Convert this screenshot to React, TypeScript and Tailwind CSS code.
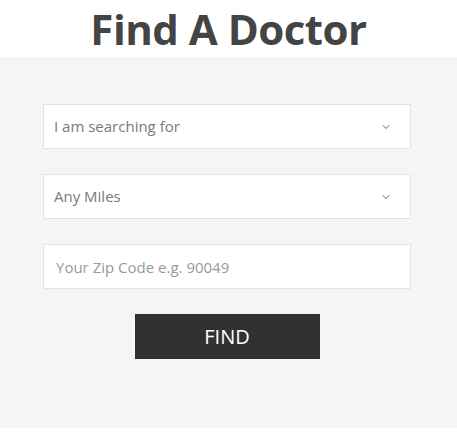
import { ChevronDown } from "lucide-react";

function SelectBox({ label }: { label: string }) {
  return (
    <div className="flex h-[45px] items-center justify-between border border-[#e3e3e3] bg-white pl-[10px] pr-[18px]">
      <span className="text-[15px] text-[#7a7a7a]">{label}</span>
      <ChevronDown className="h-[12px] w-[12px] text-[#666]" strokeWidth={2} />
    </div>
  );
}

export default function App() {
  return (
    <div className="w-[457px] bg-white font-['Open_Sans',sans-serif]">
      <header className="flex h-[57px] items-center justify-center">
        <h1 className="text-[42px] font-bold leading-none tracking-[-0.5px] text-[#444]">Find A Doctor</h1>
      </header>
      <section className="bg-[#f5f5f5] pb-[69px] pl-[43px] pr-[46px] pt-[47px]">
        <div className="flex flex-col gap-[25px]">
          <SelectBox label="I am searching for" />
          <SelectBox label="Any Miles" />
          <input
            type="text"
            placeholder="Your Zip Code e.g. 90049"
            className="h-[45px] border border-[#e3e3e3] bg-white px-[12px] text-[15px] text-[#555] outline-none placeholder:text-[#999]"
          />
          <div className="flex justify-center">
            <button className="h-[45px] w-[185px] bg-[#313131] text-[20px] text-white">FIND</button>
          </div>
        </div>
      </section>
    </div>
  );
}
